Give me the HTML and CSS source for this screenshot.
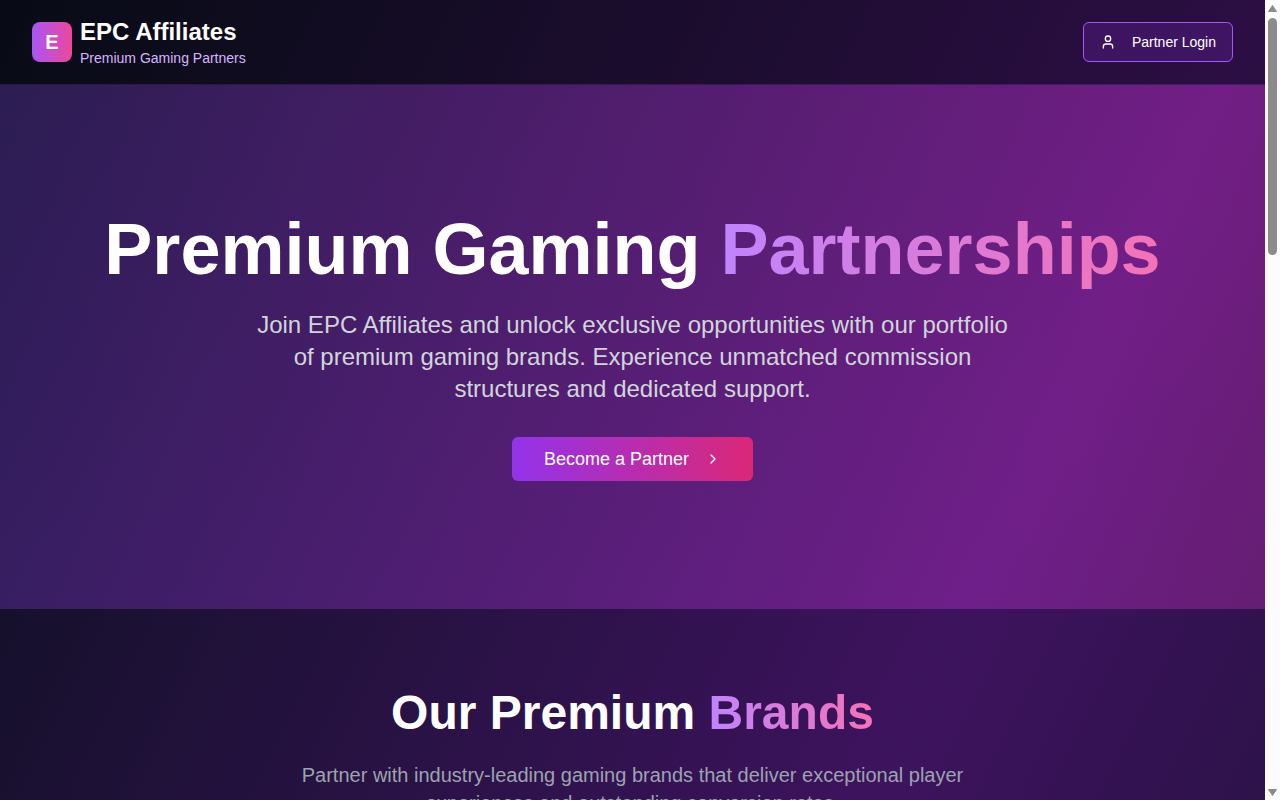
FILE: index.html
```
<!DOCTYPE html>
<html lang="en">
<head>
  <meta charset="utf-8">
  <title>EPC Affiliates</title>
  <link rel="stylesheet" href="styles.css">
</head>
<body>
  <div class="page">
    <header class="header">
      <div class="brand">
        <div class="logo">E</div>
        <div>
          <div class="brand-name">EPC Affiliates</div>
          <div class="brand-tag">Premium Gaming Partners</div>
        </div>
      </div>
      <button class="login" type="button">
        <svg class="icon" viewBox="0 0 24 24"><path d="M19 21v-2a4 4 0 0 0-4-4H9a4 4 0 0 0-4 4v2"/><circle cx="12" cy="7" r="4"/></svg>
        Partner Login
      </button>
    </header>

    <section class="hero">
      <h1>Premium Gaming <span class="accent">Partnerships</span></h1>
      <p>Join EPC Affiliates and unlock exclusive opportunities with our portfolio of premium gaming brands. Experience unmatched commission structures and dedicated support.</p>
      <button class="cta" type="button">
        Become a Partner
        <svg class="icon" viewBox="0 0 24 24"><path d="m9 18 6-6-6-6"/></svg>
      </button>
    </section>

    <section class="brands">
      <h2>Our Premium <span class="accent">Brands</span></h2>
      <p>Partner with industry-leading gaming brands that deliver exceptional player experiences and outstanding conversion rates.</p>
    </section>
  </div>

  <div class="scrollbar">
    <svg class="arrow" viewBox="0 0 9 7"><path d="M4.5 0.5 8.5 6.5h-8z"/></svg>
    <div class="track"><div class="thumb"></div></div>
    <svg class="arrow" viewBox="0 0 9 7"><path d="M4.5 6.5 0.5 0.5h8z"/></svg>
  </div>
</body>
</html>
```
FILE: styles.css
```
* {
  box-sizing: border-box;
}
body {
  margin: 0;
  display: flex;
  height: 100vh;
  overflow: hidden;
  font-family: "Liberation Sans", Arial, sans-serif;
  color: #fff;
}
h1, h2, p {
  margin: 0;
}
button {
  display: inline-flex;
  align-items: center;
  gap: 16px;
  font-family: inherit;
  color: #fff;
  border-radius: 6px;
  cursor: pointer;
}
.page {
  flex: 1;
  min-width: 0;
  overflow: hidden;
  display: flex;
  flex-direction: column;
  background: #0f172a linear-gradient(to bottom right, #0f172a, #581c87, #0f172a) no-repeat;
  background-size: 100% 325vh;
}
.icon {
  width: 16px;
  height: 16px;
  fill: none;
  stroke: currentColor;
  stroke-width: 2;
  stroke-linecap: round;
  stroke-linejoin: round;
}

/* header */
.header {
  flex: none;
  display: flex;
  align-items: center;
  justify-content: space-between;
  padding: 16px 32px;
  background: rgba(0,0,0,.5);
  border-bottom: 1px solid rgba(168,85,247,.2);
}
.brand {
  display: flex;
  align-items: center;
  gap: 8px;
}
.logo {
  width: 40px;
  height: 40px;
  border-radius: 8px;
  background: linear-gradient(to right, #a855f7, #ec4899);
  font-size: 20px;
  font-weight: bold;
  line-height: 40px;
  text-align: center;
}
.brand-name {
  font-size: 24px;
  line-height: 32px;
  font-weight: bold;
}
.brand-tag {
  font-size: 14px;
  line-height: 20px;
  color: #d8b4fe;
}
.login {
  height: 40px;
  padding: 0 16px;
  border: 1px solid #a855f7;
  background: rgba(147,51,234,.2);
  font-size: 14px;
}

/* hero */
.hero {
  flex: none;
  padding: 128px 32px;
  text-align: center;
  background: linear-gradient(to right, rgba(147,51,234,.2), rgba(219,39,119,.2));
}
.hero h1 {
  font-size: 72px;
  line-height: 72px;
  margin-bottom: 24px;
}
.hero p {
  max-width: 768px;
  margin: 0 auto 32px;
  font-size: 24px;
  line-height: 32px;
  color: #d1d5db;
}
.accent {
  background: linear-gradient(to right, #c084fc, #f472b6);
  -webkit-background-clip: text;
  background-clip: text;
  color: transparent;
}
.cta {
  height: 44px;
  padding: 0 32px;
  border: 0;
  background: linear-gradient(to right, #9333ea, #db2777);
  font-size: 18px;
  vertical-align: top;
}

/* brands */
.brands {
  flex: 1 0 auto;
  padding: 80px 32px;
  text-align: center;
  background: rgba(0,0,0,.3);
}
.brands h2 {
  font-size: 48px;
  line-height: 48px;
  margin-bottom: 24px;
}
.brands p {
  max-width: 672px;
  margin: 0 auto;
  font-size: 20px;
  line-height: 28px;
  color: #9ca3af;
}

/* scrollbar */
.scrollbar {
  flex: none;
  display: flex;
  flex-direction: column;
  align-items: center;
  gap: 6px;
  width: 15px;
  padding: 5px 0 4px;
  background: #fcfcfc;
}
.arrow {
  flex: none;
  width: 9px;
  height: 7px;
  fill: #8b8b8b;
  stroke: #8b8b8b;
  stroke-linejoin: round;
}
.track {
  flex: 1;
  width: 9px;
}
.thumb {
  height: 31%;
  border-radius: 5px;
  background: #8b8b8b;
}
```
